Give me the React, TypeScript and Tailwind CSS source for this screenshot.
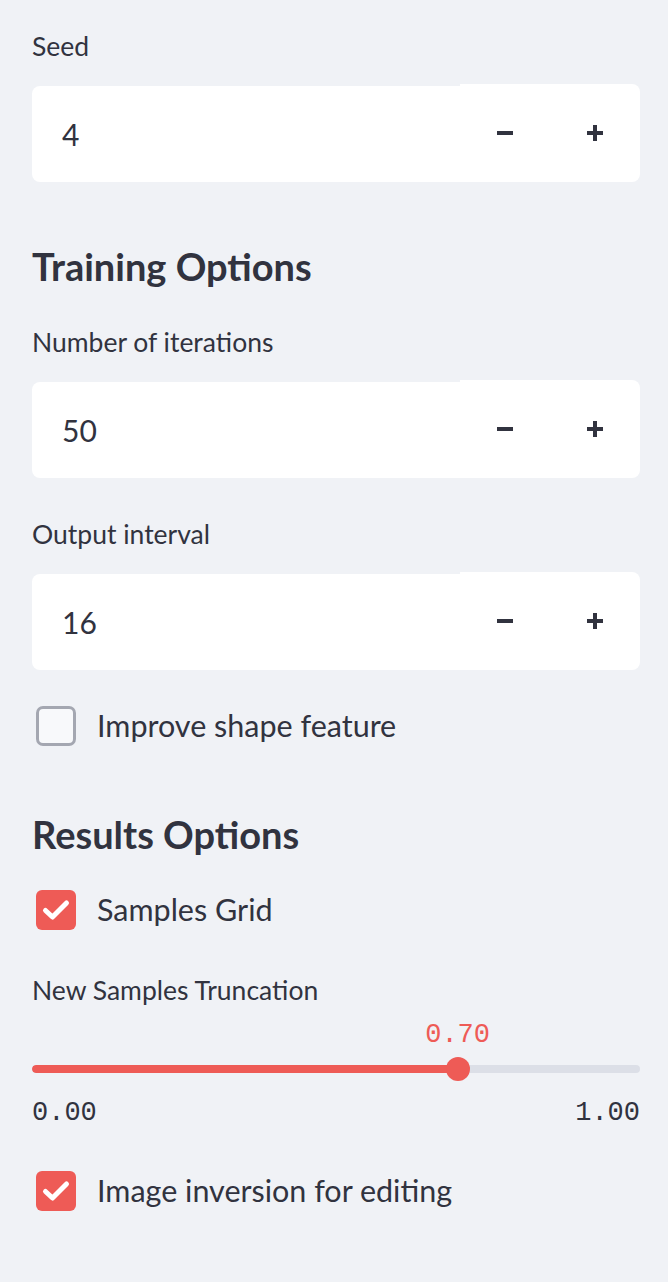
import React from "react";

const SANS = "font-['Lato','Noto_Sans',sans-serif]";
const MONO = "font-['Liberation_Mono','DejaVu_Sans_Mono',monospace]";
const RED = "#ee5b56";

function Label({ text }: { text: string }) {
  return (
    <div className={`h-[40px] flex items-center text-[26.5px] text-[#31333f] ${SANS}`}>
      {text}
    </div>
  );
}

function Heading({ text }: { text: string }) {
  return (
    <div className={`h-[48px] flex items-center text-[38px] font-bold text-[#31333f] ${SANS}`}>
      {text}
    </div>
  );
}

function NumberInput({ value }: { value: string }) {
  return (
    <div className="flex h-[98px] w-full">
      <div
        className={`flex-1 mt-[2px] bg-white rounded-l-[8px] flex items-center pl-[30px] text-[30px] text-[#31333f] ${SANS}`}
      >
        {value}
      </div>
      <div className="flex w-[180px] bg-white rounded-r-[8px]">
        <button className="w-[90px] flex items-center justify-center">
          <svg width="16" height="16" viewBox="0 0 16 16">
            <rect x="0" y="6" width="16" height="4" fill="#31333f" />
          </svg>
        </button>
        <button className="w-[90px] flex items-center justify-center">
          <svg width="16" height="16" viewBox="0 0 16 16">
            <rect x="0" y="6" width="16" height="4" fill="#31333f" />
            <rect x="6" y="0" width="4" height="16" fill="#31333f" />
          </svg>
        </button>
      </div>
    </div>
  );
}

function Checkbox({ label, checked }: { label: string; checked: boolean }) {
  return (
    <div className="h-[40px] flex items-center">
      <div className="w-[40px] h-[40px] ml-[4px] flex items-center justify-center">
        {checked ? (
          <div className="w-[40px] h-[40px] rounded-[6px] bg-[#ee5b56] flex items-center justify-center">
            <svg width="40" height="40" viewBox="0 0 40 40">
              <polyline
                points="9.5,20.5 16.5,27 30.5,13"
                fill="none"
                stroke="white"
                strokeWidth="5"
                strokeLinecap="round"
                strokeLinejoin="round"
              />
            </svg>
          </div>
        ) : (
          <div className="w-[40px] h-[40px] rounded-[7px] border-[3px] border-[#a4a7b1] bg-[#f8f9fb]" />
        )}
      </div>
      <span className={`ml-[21px] text-[30.5px] text-[#31333f] ${SANS}`}>{label}</span>
    </div>
  );
}

function Slider({ value, min, max }: { value: number; min: number; max: number }) {
  const pct = ((value - min) / (max - min)) * 100;
  return (
    <div className="w-full">
      <div className="relative h-[30px] mt-[9px]">
        <span
          className={`absolute top-0 h-[30px] flex items-center -translate-x-1/2 text-[27px] text-[#ee5b56] ${MONO}`}
          style={{ left: `${pct}%` }}
        >
          {value.toFixed(2)}
        </span>
      </div>
      <div className="relative h-[24px] mt-[7px] flex items-center">
        <div className="w-full h-[8px] rounded-full bg-[#dcdfe7] overflow-hidden">
          <div className="h-full rounded-full" style={{ width: `${pct}%`, background: RED }} />
        </div>
        <div
          className="absolute top-0 w-[24px] h-[24px] rounded-full -translate-x-1/2"
          style={{ left: `${pct}%`, background: RED }}
        />
      </div>
      <div className={`h-[30px] mt-[17px] flex items-center justify-between text-[27px] text-[#31333f] ${MONO}`}>
        <span>{min.toFixed(2)}</span>
        <span>{max.toFixed(2)}</span>
      </div>
    </div>
  );
}

export default function App() {
  return (
    <div className="w-full min-h-screen bg-[#f0f2f6] pl-[32px] pr-[28px] pt-[27px] pb-[60px]">
      <Label text="Seed" />
      <div className="mt-[17px]">
        <NumberInput value="4" />
      </div>

      <div className="mt-[60px]">
        <Heading text="Training Options" />
      </div>
      <div className="mt-[33px]">
        <Label text="Number of iterations" />
      </div>
      <div className="mt-[17px]">
        <NumberInput value="50" />
      </div>
      <div className="mt-[37px]">
        <Label text="Output interval" />
      </div>
      <div className="mt-[17px]">
        <NumberInput value="16" />
      </div>
      <div className="mt-[36px]">
        <Checkbox label="Improve shape feature" checked={false} />
      </div>

      <div className="mt-[64px]">
        <Heading text="Results Options" />
      </div>
      <div className="mt-[32px]">
        <Checkbox label="Samples Grid" checked />
      </div>
      <div className="mt-[41px]">
        <Label text="New Samples Truncation" />
      </div>
      <Slider value={0.7} min={0} max={1} />
      <div className="mt-[43px]">
        <Checkbox label="Image inversion for editing" checked />
      </div>
    </div>
  );
}
